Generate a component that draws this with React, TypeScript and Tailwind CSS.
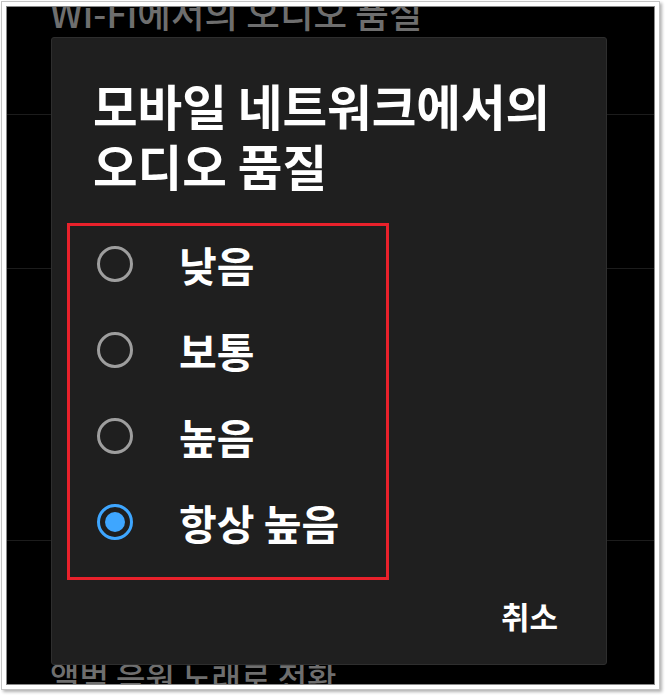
const options = [
	{ label: "낮음", checked: false },
	{ label: "보통", checked: false },
	{ label: "높음", checked: false },
	{ label: "항상 높음", checked: true },
];

const font = { fontFamily: '"Noto Sans CJK KR", "Noto Sans", sans-serif' };

function Radio({ checked }: { checked: boolean }) {
	if (checked) {
		return (
			<span className="grid h-9 w-9 shrink-0 place-items-center rounded-full border-[3px] border-[#3ea6ff]">
				<span className="h-5 w-5 rounded-full bg-[#3ea6ff]" />
			</span>
		);
	}
	return (
		<span className="h-9 w-9 shrink-0 rounded-full border-[3px] border-[#9e9e9e]" />
	);
}

export default function App() {
	return (
		<div className="h-[697px] w-[666px] bg-white pl-[1px] pt-[1px]" style={font}>
			<div className="h-[689px] w-[659px] border border-[#c4c4c4] bg-white p-[4px] shadow-[2px_2px_3px_rgba(0,0,0,0.3)]">
				<div className="relative h-full overflow-hidden border border-[#8a8a8a] bg-black">
					{/* settings list behind the dialog */}
					<div className="flex flex-col font-medium leading-none text-[#6e6e6e]">
						<div className="h-[108px] border-b border-[#1c1c1c] pl-[43px]">
							<p className="-mt-[12px] text-[36.5px]">Wi-Fi에서의 오디오 품질</p>
						</div>
						<div className="h-[154px] border-b border-[#1c1c1c]" />
						<div className="h-[272px] border-b border-[#1c1c1c]" />
						<div className="pl-[43px] pt-[119px]">
							<p className="text-[32px]">앨범 음원 노래로 전환</p>
						</div>
					</div>

					{/* dialog */}
					<div className="absolute left-[44px] top-[30px] flex h-[628px] w-[556px] flex-col rounded-[3px] border border-[#2e2e2e] bg-[#1f1f1f]">
						<h2 className="pl-[41px] pt-[37px] text-[48.5px] font-bold leading-[60px] text-white">
							모바일 네트워크에서의
							<br />
							오디오 품질
						</h2>
						<div className="ml-[15px] mt-[28px] flex w-[322px] flex-col gap-[50px] border-[3px] border-[#e8212b] pb-[37px] pl-[27px] pt-[20px]">
							{options.map(({ label, checked }) => (
								<div key={label} className="flex h-9 items-center gap-[46px]">
									<Radio checked={checked} />
									<span className="text-[41px] font-bold leading-none text-white">
										{label}
									</span>
								</div>
							))}
						</div>
						<div className="mt-[20px] flex justify-end pr-[48px]">
							<span className="text-[31px] font-bold leading-none text-white">취소</span>
						</div>
					</div>
				</div>
			</div>
		</div>
	);
}
